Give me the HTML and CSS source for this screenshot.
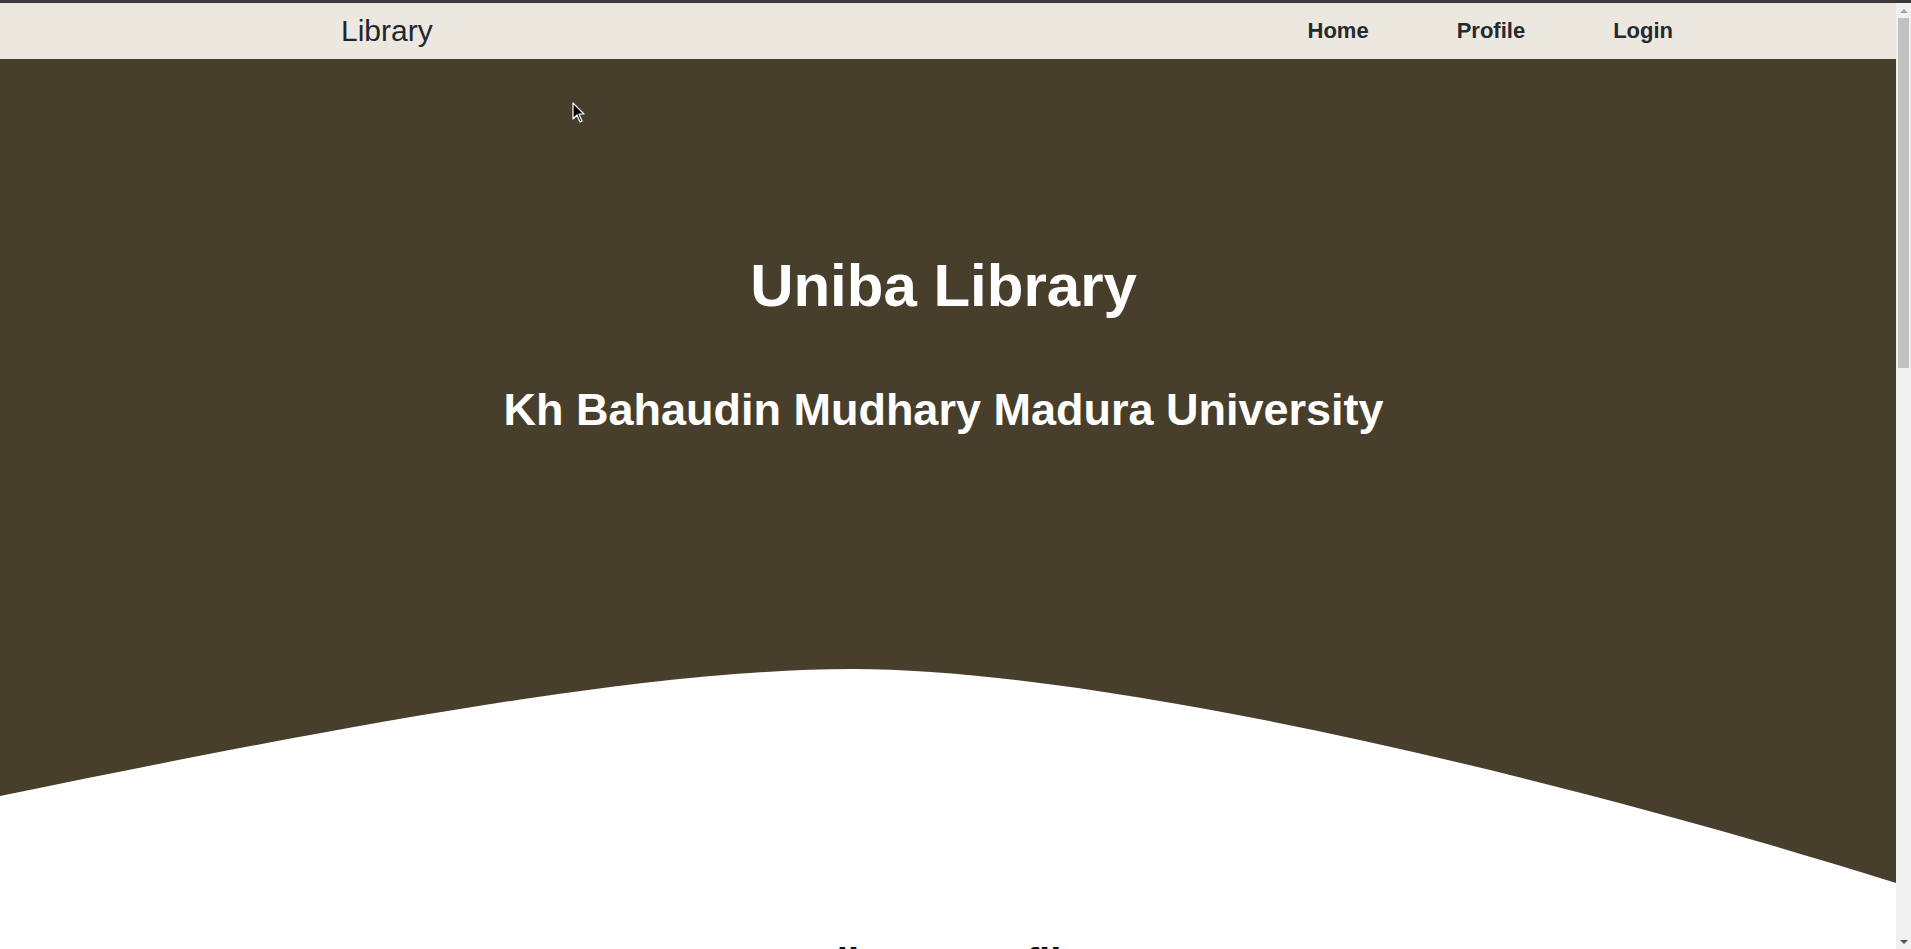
FILE: index.html
```html
<!DOCTYPE html>
<html lang="en">
<head>
<meta charset="utf-8">
<title>Uniba Library</title>
<link rel="stylesheet" href="styles.css">
</head>
<body>
<div class="page">
  <nav class="navbar">
    <a class="brand" href="#">Library</a>
    <ul class="nav-links">
      <li><a href="#">Home</a></li>
      <li><a href="#">Profile</a></li>
      <li><a href="#">Login</a></li>
    </ul>
  </nav>
  <header class="hero">
    <div class="hero-text">
      <h1 class="hero-title">Uniba Library</h1>
      <h2 class="hero-sub">Kh Bahaudin Mudhary Madura University</h2>
    </div>
    <svg class="wave" viewBox="0 0 1896 214" preserveAspectRatio="none" aria-hidden="true">
      <path d="M0,127 C350,55 650,0 853,0 C1100,0 1550,105 1896,214 L0,214 Z" fill="#ffffff"/>
    </svg>
  </header>
  <section class="profile">
    <h2 class="profile-title">Library Profile</h2>
    <p class="profile-text">Uniba Library serves the students and lecturers of Kh Bahaudin Mudhary Madura University.</p>
  </section>
</div>
<div class="scrollbar" aria-hidden="true">
  <span class="arrow arrow-up"></span>
  <div class="track">
    <div class="thumb"></div>
  </div>
  <span class="arrow arrow-down"></span>
</div>
<svg class="cursor" width="14" height="22" viewBox="0 0 14 22" aria-hidden="true">
  <path d="M1,1 L1,17 L5,13 L8,20 L10,19 L7,12 L12,12 Z" fill="#000" stroke="#fff" stroke-width="1.2" stroke-linejoin="round"/>
</svg>
</body>
</html>
```

FILE: styles.css
```css
html, body {
  margin: 0;
  padding: 0;
}

html {
  overflow: hidden;
}

body {
  border-top: 3px solid #3a3a3a;
  font-family: "Liberation Sans", Arial, sans-serif;
  color: #212529;
  background: #ffffff;
  display: flex;
  align-items: flex-start;
}

.page {
  flex: 1;
  min-width: 0;
}

.navbar {
  height: 56px;
  background: #ece8df;
  display: flex;
  align-items: center;
  justify-content: space-between;
  padding-left: 341px;
  padding-right: 179px;
}

.brand {
  font-size: 30px;
  color: #1e2630;
  text-decoration: none;
}

.nav-links {
  display: flex;
  list-style: none;
  margin: 0;
  padding: 0;
}

.nav-links a {
  display: block;
  padding: 0 44px;
  font-size: 22px;
  font-weight: bold;
  color: #252a31;
  text-decoration: none;
}

.hero {
  background: #473e2b;
  color: #ffffff;
}

.hero-text {
  text-align: center;
  padding-top: 191px;
  padding-bottom: 232px;
  padding-right: 9px;
}

.hero-title {
  margin: 0;
  font-size: 60px;
  line-height: 72px;
  font-weight: bold;
}

.hero-sub {
  margin: 61px 0 0;
  font-size: 45px;
  line-height: 54px;
  font-weight: bold;
}

.wave {
  display: block;
  width: 100%;
  height: 214px;
}

.profile {
  min-height: 1600px;
  padding-top: 56px;
  text-align: center;
}

.profile-title {
  margin: 0;
  font-size: 40px;
  line-height: 48px;
  font-weight: bold;
  color: #111111;
}

.profile-text {
  margin: 30px auto 0;
  font-size: 18px;
  max-width: 900px;
}

.scrollbar {
  flex: 0 0 15px;
  height: 946px;
  background: #f0f0f0;
  display: flex;
  flex-direction: column;
  align-items: center;
}

.arrow {
  flex: 0 0 15px;
  width: 15px;
  display: flex;
  align-items: center;
  justify-content: center;
}

.arrow::before {
  content: "";
  border-left: 4px solid transparent;
  border-right: 4px solid transparent;
}

.arrow-up::before {
  border-bottom: 4px solid #a3a3a3;
}

.arrow-down::before {
  border-top: 4px solid #505050;
}

.track {
  flex: 1;
  width: 100%;
  display: flex;
  justify-content: center;
}

.thumb {
  width: 11px;
  height: 350px;
  background: #c1c1c1;
}

.cursor {
  position: absolute;
  left: 572px;
  top: 102px;
}
```
